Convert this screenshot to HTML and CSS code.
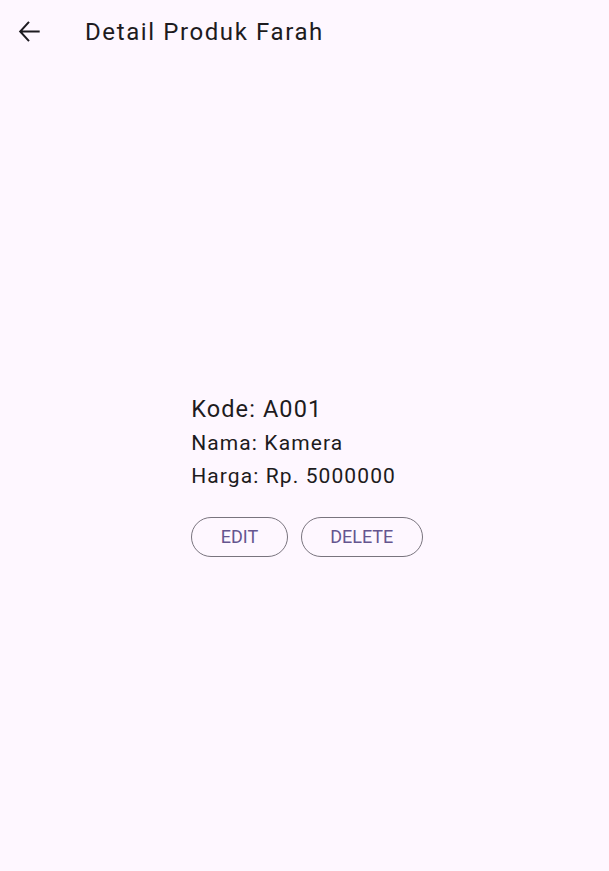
FILE: index.html
```html
<!DOCTYPE html>
<html lang="id">
<head>
<meta charset="utf-8">
<title>Detail Produk Farah</title>
<link rel="stylesheet" href="styles.css">
</head>
<body>
<div class="app">
  <header class="appbar">
    <button class="back" aria-label="Kembali">
      <svg width="24" height="24" viewBox="0 0 24 24" aria-hidden="true">
        <path d="M22.7 11.5H3.4M12 1.9 3.2 11.5l8.8 9.6" fill="none" stroke="#1d1b20" stroke-width="2"/>
      </svg>
    </button>
    <h1 class="title">Detail Produk Farah</h1>
  </header>
  <main class="body">
    <div class="detail">
      <p class="kode">Kode: A001</p>
      <p class="line">Nama: Kamera</p>
      <p class="line">Harga: Rp. 5000000</p>
      <div class="actions">
        <button class="outlined">EDIT</button>
        <button class="outlined">DELETE</button>
      </div>
    </div>
  </main>
</div>
</body>
</html>
```
FILE: styles.css
```css
html, body {
  margin: 0;
  padding: 0;
  height: 100%;
}
body {
  background: #fef7ff;
  font-family: Roboto, "Noto Sans", sans-serif;
  color: #1d1b20;
}
.app {
  display: flex;
  flex-direction: column;
  min-height: 100%;
}
.appbar {
  height: 64px;
  display: flex;
  align-items: center;
  flex: none;
}
.back {
  width: 24px;
  height: 24px;
  margin-left: 17px;
  padding: 0;
  border: 0;
  background: none;
  display: flex;
}
.title {
  margin: -1px 0 0 44px;
  font-size: 24px;
  font-weight: 400;
  line-height: 28px;
  letter-spacing: 1.6px;
  color: #1d1b20;
}
.body {
  flex: 1;
  display: flex;
  align-items: center;
  justify-content: center;
  padding: 16px 0 0 5px;
}
.detail {
  display: flex;
  flex-direction: column;
  align-items: flex-start;
}
.detail p {
  margin: 0;
}
.kode {
  font-size: 23.5px;
  line-height: 28px;
  letter-spacing: 1.1px;
}
.line {
  font-size: 21px;
  line-height: 33px;
  letter-spacing: 1.1px;
}
.kode + .line {
  margin-top: 4px;
}
.actions {
  display: flex;
  gap: 13px;
  margin-top: 24px;
}
.outlined {
  height: 40px;
  padding: 0 28.5px;
  border: 1px solid #79747e;
  border-radius: 20px;
  background: transparent;
  color: #65558f;
  font-family: Roboto, "Noto Sans", sans-serif;
  font-size: 18px;
  font-weight: 400;
  letter-spacing: 0;
}
```
